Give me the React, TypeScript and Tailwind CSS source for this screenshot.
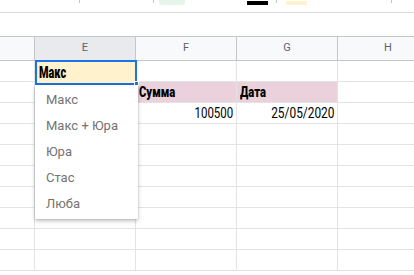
import React from 'react';

const cols = ['', 'E', 'F', 'G', 'H'];
const options = ['Макс', 'Макс + Юра', 'Юра', 'Стас', 'Люба'];

function Cell({ children, className = '' }: { children?: React.ReactNode; className?: string }) {
  return (
    <div className={`h-[21px] border-r border-b border-[#e2e3e3] flex items-center overflow-hidden whitespace-nowrap ${className}`}>
      {children}
    </div>
  );
}

// condensed sheet font imitation
function Narrow({ children, className = '' }: { children: React.ReactNode; className?: string }) {
  return <span className={`inline-block font-['Roboto',Arial,sans-serif] ${className}`}>{children}</span>;
}

export default function App() {
  const rows = Array.from({ length: 10 }, (_, i) => i);

  return (
    <div className="relative w-[414px] h-[275px] overflow-hidden bg-white font-['Roboto',Arial,sans-serif]">
      {/* toolbar remnants */}
      <div className="flex items-start h-[13px] border-b border-[#dadce0]">
        <div className="w-[79px]" />
        <div className="w-px h-[3px] bg-[#c7c7c7]" />
        <div className="ml-[73px] w-px h-[3px] bg-[#c7c7c7]" />
        <div className="ml-[5px] w-[26px] h-[5px] rounded-b-[2px] bg-[#e6f4ea]" />
        <div className="ml-[62px] mt-[1px] w-[21px] h-[4px] bg-black" />
        <div className="ml-[8px] w-px h-[3px] bg-[#c7c7c7]" />
        <div className="ml-[9px] mt-[1px] w-[21px] h-[4px] bg-[#fff2cc]" />
        <div className="ml-[84px] w-px h-[3px] bg-[#c7c7c7]" />
      </div>
      <div className="h-[23px]" />

      {/* sheet */}
      <div className="grid grid-cols-[35px_101px_101px_101px_101px] w-[439px]">
        {cols.map((c) => (
          <div
            key={c || 'corner'}
            className={`h-[25px] border-t border-b border-r border-[#c4c7c5] flex items-center justify-center text-[11px] text-[#5f6368] ${c === 'E' ? 'bg-[#e8eaed]' : 'bg-[#f8f9fa]'}`}
          >
            {c}
          </div>
        ))}
        {rows.map((r) => (
          <React.Fragment key={r}>
            <Cell />
            <Cell />
            {r === 1 ? (
              <>
                <Cell className="bg-[#ead1dc] pl-[3px] text-black">
                  <Narrow className="font-black text-[14px] scale-x-[0.8] origin-left">Сумма</Narrow>
                </Cell>
                <Cell className="bg-[#ead1dc] pl-[3px] text-black">
                  <Narrow className="font-black text-[14px] scale-x-[0.8] origin-left">Дата</Narrow>
                </Cell>
              </>
            ) : r === 2 ? (
              <>
                <Cell className="justify-end pr-[3px] text-black">
                  <Narrow className="text-[14px] scale-x-[0.82] origin-right">100500</Narrow>
                </Cell>
                <Cell className="justify-end pr-[3px] text-black">
                  <Narrow className="text-[14px] scale-x-[0.85] origin-right">25/05/2020</Narrow>
                </Cell>
              </>
            ) : (
              <>
                <Cell />
                <Cell />
              </>
            )}
            <Cell />
          </React.Fragment>
        ))}
      </div>

      {/* active cell editor */}
      <div className="absolute left-[35px] top-[60px] w-[102px] h-[25px] border-2 border-[#1a73e8] bg-[#fff2cc] flex items-center pl-[2px]">
        <Narrow className="font-black text-[16px] text-black scale-x-[0.68] origin-left">Макс</Narrow>
      </div>
      <div className="absolute left-[134px] top-[81px] w-[5px] h-[5px] bg-[#1a73e8] border border-white" />

      {/* dropdown */}
      <div className="absolute left-[35px] top-[85px] w-[103px] py-[2px] bg-white shadow-[0_2px_4px_rgba(0,0,0,0.25),0_0_1px_rgba(0,0,0,0.2)]">
        {options.map((o) => (
          <div key={o} className="h-[26px] flex items-center pl-[11px] text-[13px] text-[#737373]">
            {o}
          </div>
        ))}
      </div>
    </div>
  );
}
